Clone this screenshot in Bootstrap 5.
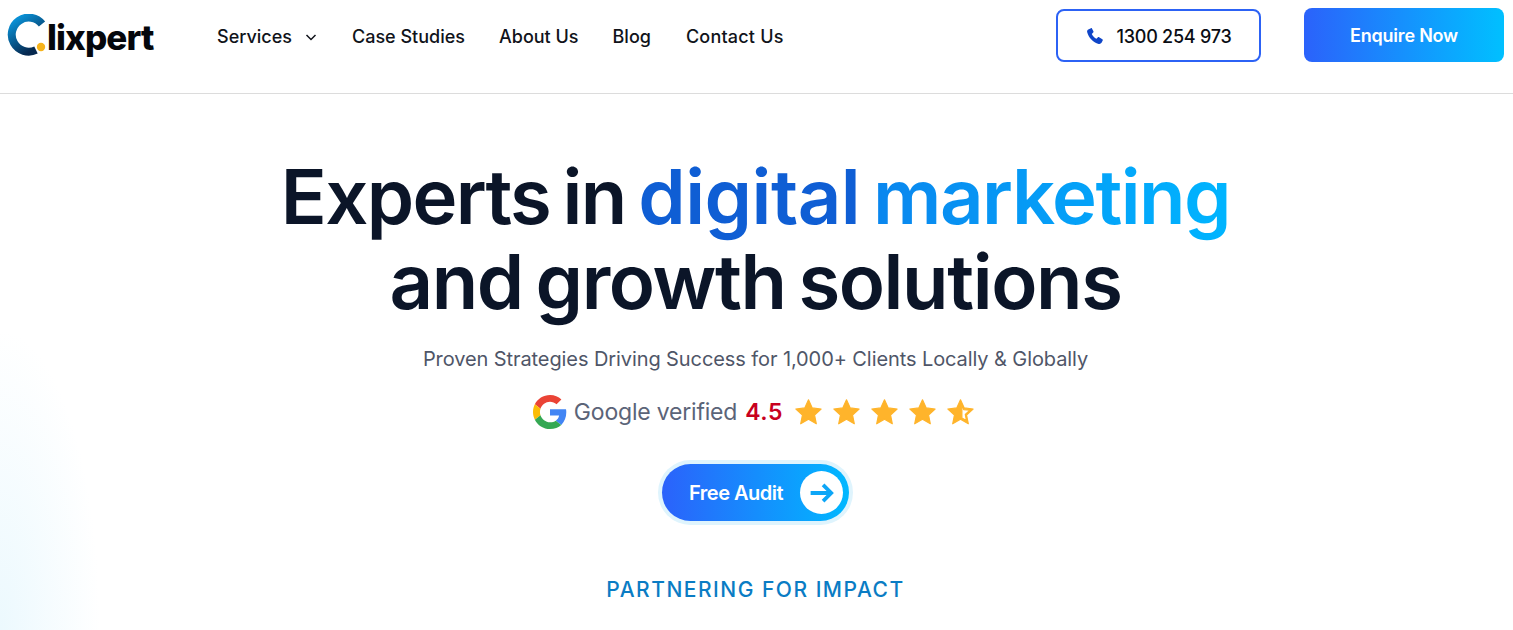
<!DOCTYPE html>
<html lang="en">
<head>
  <meta charset="UTF-8" />
  <meta name="viewport" content="width=device-width, initial-scale=1" />
  <title>Clixpert</title>
  <link href="https://cdn.jsdelivr.net/npm/bootstrap@5.3.3/dist/css/bootstrap.min.css" rel="stylesheet" />
  <style>
    html, body { height: 630px; overflow: hidden; }
    body { background: #fff; font-family: "Inter", "Liberation Sans", sans-serif; color: #0b1528; }
    .top-bar { height: 94px; border-bottom: 1px solid #dcdcdc; padding: 8px 9px 0 3px; }
    .brand-box { width: 214px; height: 56px; text-decoration: none; padding-top: 6px; }
    .brand-word { font-size: 35px; font-weight: 800; color: #05070c; letter-spacing: -0.9px; line-height: 1; margin-top: 6px; }
    .menu-row { gap: 34px; padding-top: 16px; }
    .menu-row a { color: #10131a; font-size: 18px; font-weight: 500; text-decoration: none; line-height: 26px; }
    .menu-last { letter-spacing: 0.2px; margin-left: 1px; }
    .phone-btn { width: 205px; height: 53px; border: 2px solid #2c62f5; border-radius: 8px; color: #0a0d14; font-size: 18px; font-weight: 500; letter-spacing: -0.25px; gap: 13px; margin-top: 1px; padding-top: 1px; text-decoration: none; }
    .enquire-btn { width: 200px; height: 54px; border-radius: 8px; margin-left: 43px; padding-top: 1px; background: linear-gradient(90deg, #2b62fb, #00c0ff); color: #fff; font-size: 18px; font-weight: 600; letter-spacing: -0.2px; text-decoration: none; }
    .hero-area { height: 536px; padding-top: 60px; background: radial-gradient(ellipse 100px 300px at 0 100%, #ecf9fe, rgba(255,255,255,0)); }
    .hero-title { font-size: 76px; line-height: 85px; font-weight: 600; letter-spacing: -1.4px; word-spacing: -5px; margin: 0 2px 0 0; color: #0b1528; }
    .first-word { letter-spacing: -1.7px; }
    .grad-one { color: #0f5ed4; letter-spacing: -0.5px; }
    .grad-two { background: linear-gradient(90deg, #0a86ee, #00b5ff); -webkit-background-clip: text; background-clip: text; color: transparent; letter-spacing: -1.5px; }
    .hero-sub { font-size: 20px; line-height: 28px; color: #4f5668; margin: 21px 2px 0 0; letter-spacing: -0.09px; }
    .rating-row { margin-top: 21px; height: 36px; gap: 7px; margin-right: 5px; }
    .rating-label { font-size: 23px; color: #5b6478; letter-spacing: -0.2px; }
    .rating-value { font-size: 23px; font-weight: 600; color: #c8001e; letter-spacing: 0.6px; margin-left: 1px; margin-right: 4px; }
    .star-set { gap: 9px; }
    .star-set path { stroke: #ffb42b; stroke-width: 1; stroke-linejoin: round; }
    .audit-ring { margin: 30px 2px 0 0; padding: 4px; border-radius: 40px; background: #dff4fd; }
    .audit-btn { width: 187px; height: 57px; border-radius: 30px; background: linear-gradient(90deg, #2b62fb, #00b8ff); color: #fff; font-size: 20px; font-weight: 600; letter-spacing: -0.5px; text-decoration: none; padding: 0 6px 0 27px; }
    .audit-circle { width: 43px; height: 43px; border-radius: 50%; background: #fff; }
    .partner-line { margin: 51px 2px 0 0; font-size: 21px; line-height: 28px; font-weight: 500; color: #0a7cc4; letter-spacing: 1.5px; }
  </style>
</head>
<body>

  <header class="top-bar d-flex align-items-start">
    <a href="#" class="brand-box d-flex align-items-start">
      <svg width="44" height="42" viewBox="0 0 44 42">
        <defs>
          <linearGradient id="logoArc" x1="0" y1="0" x2="0.6" y2="1">
            <stop offset="0" stop-color="#0a9be3" />
            <stop offset="1" stop-color="#06284f" />
          </linearGradient>
        </defs>
        <path d="M39 10A17 17 0 1 0 33 36" fill="none" stroke="url(#logoArc)" stroke-width="8" />
        <circle cx="38" cy="33" r="4.200" fill="#f6b31b" />
      </svg>
      <span class="brand-word">lixpert</span>
    </a>
    <nav class="menu-row d-flex">
      <a href="#" class="d-flex align-items-center gap-2">Services
        <svg width="14" height="14" viewBox="0 0 14 14" class="ms-1"><path d="M2.500 5l4.500 4.500L11.500 5" fill="none" stroke="#10131a" stroke-width="1.500" /></svg>
      </a>
      <a href="#">Case Studies</a>
      <a href="#">About Us</a>
      <a href="#">Blog</a>
      <a href="#" class="menu-last">Contact Us</a>
    </nav>
    <div class="d-flex ms-auto">
      <a href="#" class="phone-btn d-flex align-items-center justify-content-center">
        <svg width="18" height="18" viewBox="0 0 24 24"><path fill="#0f45c8" d="M6.600 1.500 3 3.200C1.600 4 1.200 5.500 1.600 7c2 7.500 7.800 13.500 15.300 15.500 1.500.4 3-.1 3.800-1.400l1.600-3.100c.3-.6.1-1.300-.5-1.700l-4.300-2.700c-.5-.3-1.200-.2-1.600.2l-1.900 1.900c-2.800-1.300-5-3.700-6.300-6.500l1.900-1.800c.5-.4.6-1.100.3-1.700L7.900 2c-.3-.5-.8-.7-1.300-.5z" /></svg>
        1300 254 973
      </a>
      <a href="#" class="enquire-btn d-flex align-items-center justify-content-center">Enquire Now</a>
    </div>
  </header>

  <main class="hero-area d-flex flex-column align-items-center">
    <h1 class="hero-title text-center"><span class="first-word">Experts in</span> <span class="grad-one">digital</span> <span class="grad-two">marketing</span><br>and growth solutions</h1>
    <p class="hero-sub">Proven Strategies Driving Success for 1,000+ Clients Locally &amp; Globally</p>
    <div class="rating-row d-flex align-items-center">
      <svg width="34" height="34" viewBox="0 0 48 48">
        <path fill="#ea4335" d="M24 9.500c3.500 0 6.700 1.200 9.200 3.600l6.900-6.900C35.900 2.400 30.500 0 24 0 14.600 0 6.500 5.400 2.600 13.200l8 6.200C12.500 13.700 17.800 9.500 24 9.500z" />
        <path fill="#4285f4" d="M47 24.500c0-1.600-.1-3.100-.4-4.500H24v9h12.900c-.6 3-2.200 5.500-4.700 7.200l7.700 6C44.400 37.900 47 31.800 47 24.500z" />
        <path fill="#fbbc05" d="M10.600 28.600c-.5-1.400-.8-3-.8-4.600s.3-3.200.8-4.600l-8-6.200C.9 16.500 0 20.100 0 24s.9 7.500 2.600 10.800l8-6.200z" />
        <path fill="#34a853" d="M24 48c6.500 0 11.900-2.100 15.900-5.800l-7.700-6c-2.200 1.500-4.900 2.300-8.200 2.300-6.200 0-11.500-4.200-13.400-9.900l-8 6.200C6.500 42.600 14.600 48 24 48z" />
      </svg>
      <span class="rating-label">Google verified</span>
      <span class="rating-value">4.5</span>
      <div class="star-set d-flex">
        <svg width="29" height="28" viewBox="0 0 24 24"><path fill="#ffb42b" d="M12 1.500l3.200 7 7.600.9-5.600 5.200 1.500 7.500L12 18.300l-6.700 3.800 1.500-7.500L1.200 9.400l7.600-.9z" /></svg>
        <svg width="29" height="28" viewBox="0 0 24 24"><path fill="#ffb42b" d="M12 1.500l3.200 7 7.600.9-5.600 5.200 1.500 7.500L12 18.300l-6.700 3.800 1.500-7.500L1.200 9.400l7.600-.9z" /></svg>
        <svg width="29" height="28" viewBox="0 0 24 24"><path fill="#ffb42b" d="M12 1.500l3.200 7 7.600.9-5.600 5.200 1.500 7.500L12 18.300l-6.700 3.800 1.500-7.500L1.200 9.400l7.600-.9z" /></svg>
        <svg width="29" height="28" viewBox="0 0 24 24"><path fill="#ffb42b" d="M12 1.500l3.200 7 7.600.9-5.600 5.200 1.500 7.500L12 18.300l-6.700 3.800 1.500-7.500L1.200 9.400l7.600-.9z" /></svg>
        <svg width="29" height="28" viewBox="0 0 24 24"><path fill="#ffb42b" fill-rule="evenodd" d="M12 1.500l3.200 7 7.600.9-5.600 5.200 1.500 7.500L12 18.300l-6.700 3.800 1.500-7.500L1.200 9.400l7.600-.9zM13.200 5.500v11.600l3.900 2.200-1-5.200 3.900-3.600-5.300-.6z" /></svg>
      </div>
    </div>
    <div class="audit-ring">
      <a href="#" class="audit-btn d-flex align-items-center justify-content-between">Free Audit
        <span class="audit-circle d-flex align-items-center justify-content-center">
          <svg width="26" height="26" viewBox="0 0 24 24"><path d="M1.500 12h19M13 4.500l7.500 7.500-7.500 7.500" fill="none" stroke="#0da6f7" stroke-width="3.500" /></svg>
        </span>
      </a>
    </div>
    <div class="partner-line">PARTNERING FOR IMPACT</div>
  </main>

  <script src="https://cdn.jsdelivr.net/npm/bootstrap@5.3.3/dist/js/bootstrap.bundle.min.js"></script>
</body>
</html>
